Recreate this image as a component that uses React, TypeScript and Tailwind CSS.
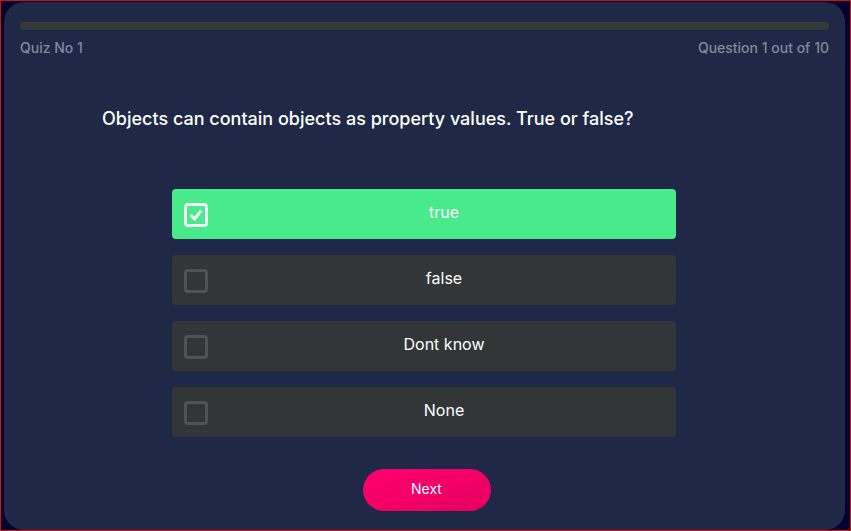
import { useState } from "react";

const options = ["true", "false", "Dont know", "None"];

function Option({
  label,
  checked,
  onChange,
}: {
  label: string;
  checked: boolean;
  onChange: () => void;
}) {
  return (
    <label
      className={`flex h-[50px] cursor-pointer items-center gap-1 rounded pl-3 text-base text-white ${
        checked ? "bg-[#48ea8b]" : "bg-[#323637]"
      }`}
    >
      <span className="mt-0.5 grid size-6 shrink-0 place-items-center">
        <input
          type="checkbox"
          checked={checked}
          onChange={onChange}
          className="col-start-1 row-start-1 size-6 appearance-none rounded-[4px] border-3 border-[#505355] checked:border-[#effff5]"
        />
        {checked && (
          <svg
            viewBox="0 0 24 24"
            className="pointer-events-none col-start-1 row-start-1 size-6"
            fill="none"
            stroke="#effff5"
            strokeWidth="3"
            aria-hidden="true"
          >
            <path d="M6.5 11.8 L10.6 16 L17.2 7.3" />
          </svg>
        )}
      </span>
      <span className="flex-1 pb-1 text-center">{label}</span>
    </label>
  );
}

export default function App() {
  const [selected, setSelected] = useState(0);

  return (
    <div className="flex min-h-screen flex-col border border-[#c81418] bg-[#05022f] pr-[5px] pl-[3px] font-['Inter','Noto_Sans',sans-serif]">
      <main className="mt-px flex-1 rounded-[20px] bg-[#1f2947] px-4 pt-5 pb-[19px]">
        <div
          role="progressbar"
          aria-label="Quiz progress"
          aria-valuenow={0}
          className="h-2 rounded-full bg-[#353a39]"
        />
        <div className="flex justify-between pt-2 text-sm font-medium text-[#8088a0]">
          <span>Quiz No 1</span>
          <span>Question 1 out of 10</span>
        </div>
        <h1 className="mt-[47px] px-[82px] text-lg leading-7 font-medium text-white">
          Objects can contain objects as property values. True or false?
        </h1>
        <div className="mt-14 flex justify-center pr-px">
          <div className="flex w-full max-w-[504px] flex-col gap-4">
            {options.map((label, index) => (
              <Option
                key={label}
                label={label}
                checked={selected === index}
                onChange={() => setSelected(index)}
              />
            ))}
          </div>
        </div>
        <div className="mt-8 flex justify-center pl-1">
          <button
            type="button"
            className="h-[42px] w-32 rounded-full bg-linear-to-br from-[#ff0070] to-[#e6005f] pb-0.5 text-sm text-white"
          >
            Next
          </button>
        </div>
      </main>
    </div>
  );
}
